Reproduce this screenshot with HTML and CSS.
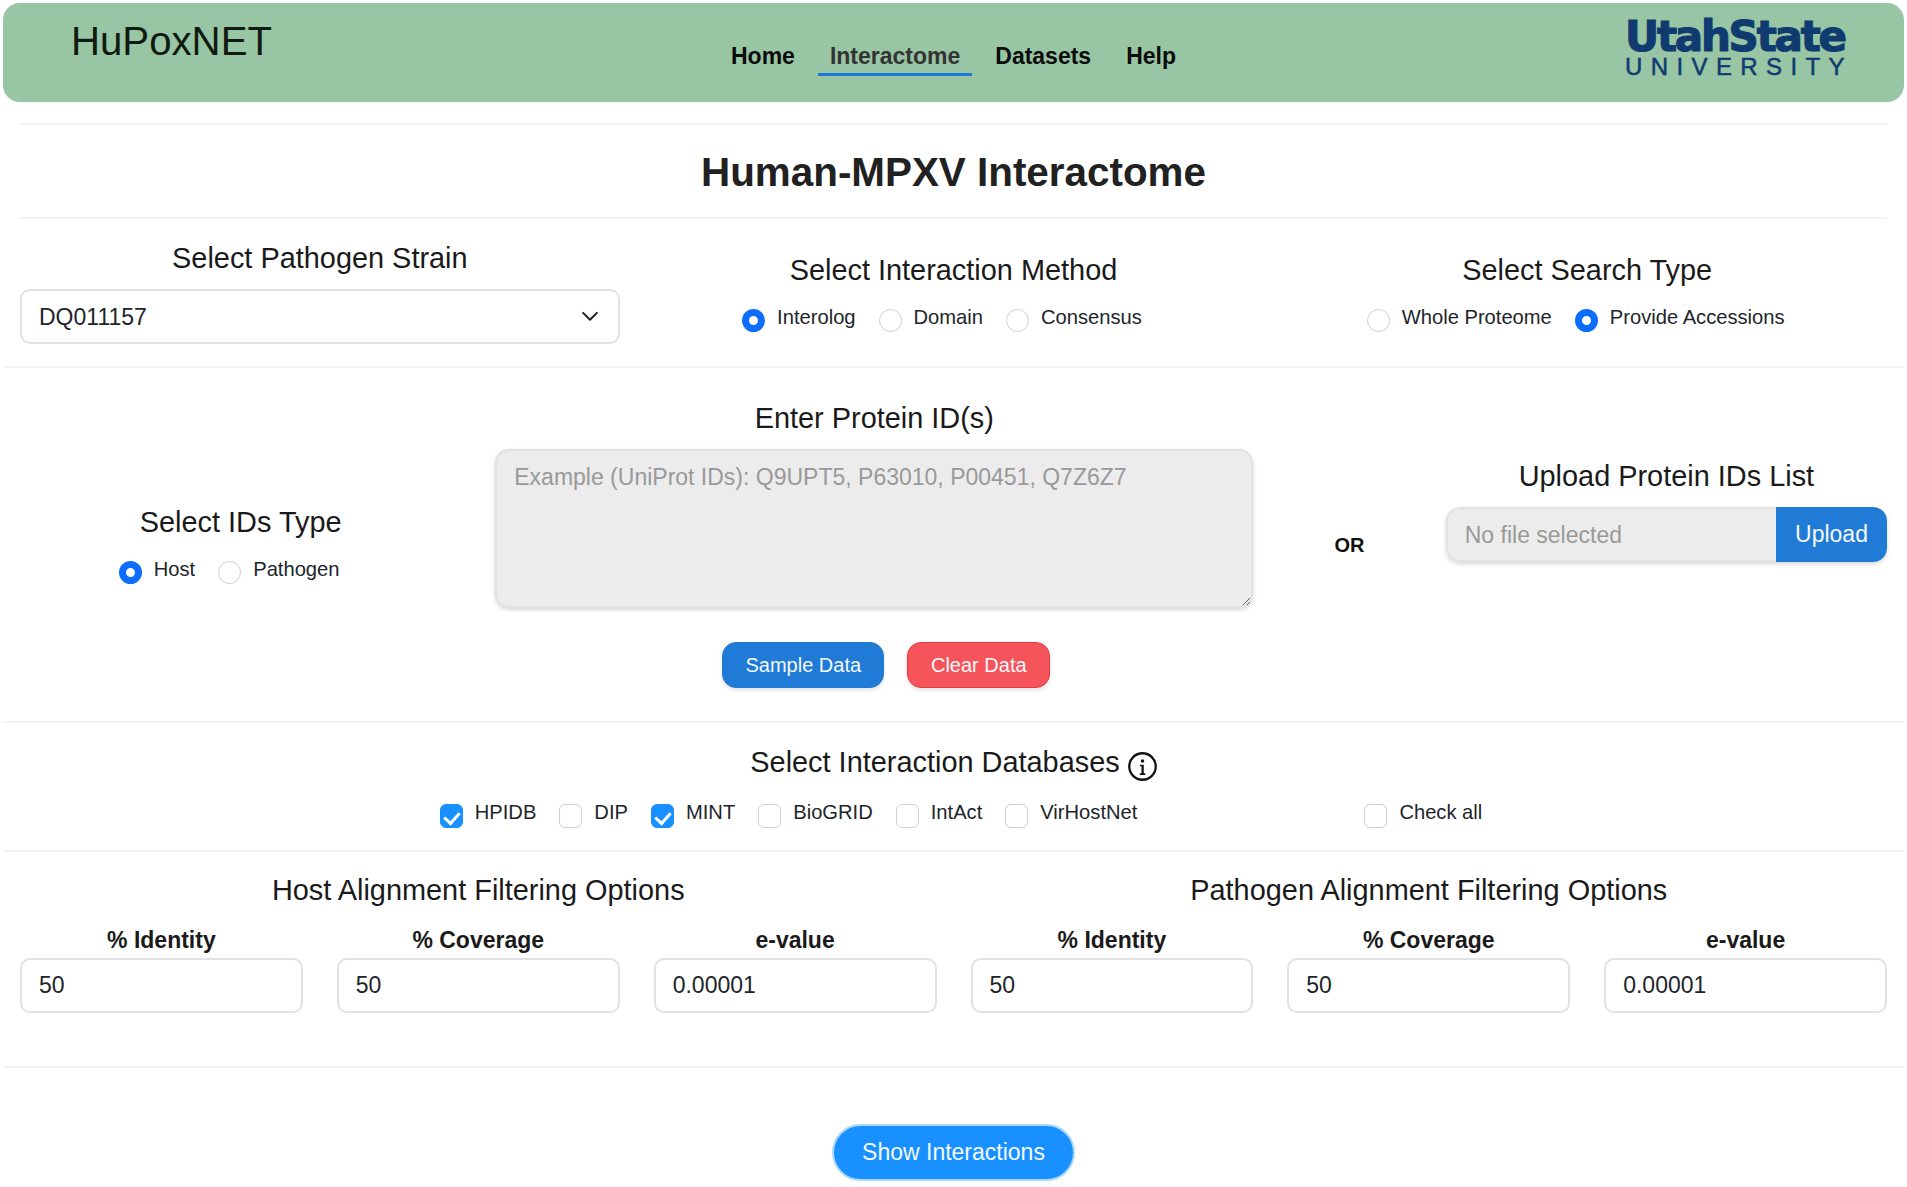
FILE: index.html
```html
<!DOCTYPE html>
<html lang="en">
<head>
<meta charset="utf-8">
<title>HuPoxNET</title>
<link rel="stylesheet" href="styles.css">
</head>
<body>
<header class="site-header">
  <div class="brand">HuPoxNET</div>
  <nav class="nav">
    <a class="nav-link">Home</a>
    <a class="nav-link active">Interactome</a>
    <a class="nav-link">Datasets</a>
    <a class="nav-link">Help</a>
  </nav>
  <div class="logo">
    <div class="logo-top">UtahState</div>
    <div class="logo-bottom">UNIVERSITY</div>
  </div>
</header>

<main>
  <h1 class="page-title">Human-MPXV Interactome</h1>

  <section class="section options">
    <div class="col">
      <h2 class="heading tight">Select Pathogen Strain</h2>
      <div class="select-wrap">
        <select class="field"><option>DQ011157</option></select>
        <svg class="chevron" viewBox="0 0 16 16" width="20" height="20"><path fill="none" stroke="#222" stroke-width="1.6" stroke-linecap="round" stroke-linejoin="round" d="M2.5 5.5 8 11l5.5-5.5"/></svg>
      </div>
    </div>
    <div class="col low">
      <h2 class="heading">Select Interaction Method</h2>
      <div class="choices">
        <label class="choice"><input type="radio" name="method" checked><span>Interolog</span></label>
        <label class="choice"><input type="radio" name="method"><span>Domain</span></label>
        <label class="choice"><input type="radio" name="method"><span>Consensus</span></label>
      </div>
    </div>
    <div class="col low">
      <h2 class="heading">Select Search Type</h2>
      <div class="choices">
        <label class="choice"><input type="radio" name="search"><span>Whole Proteome</span></label>
        <label class="choice"><input type="radio" name="search" checked><span>Provide Accessions</span></label>
      </div>
    </div>
  </section>

  <section class="section ids">
    <div class="ids-type">
      <h2 class="heading">Select IDs Type</h2>
      <div class="choices">
        <label class="choice"><input type="radio" name="idtype" checked><span>Host</span></label>
        <label class="choice"><input type="radio" name="idtype"><span>Pathogen</span></label>
      </div>
    </div>
    <div class="ids-enter">
      <h2 class="heading small-gap">Enter Protein ID(s)</h2>
      <textarea class="ids-text" placeholder="Example (UniProt IDs): Q9UPT5, P63010, P00451, Q7Z6Z7"></textarea>
      <div class="btn-row">
        <button class="btn btn-blue" type="button">Sample Data</button>
        <button class="btn btn-red" type="button">Clear Data</button>
      </div>
    </div>
    <div class="ids-or">OR</div>
    <div class="ids-upload">
      <h2 class="heading small-gap">Upload Protein IDs List</h2>
      <div class="file">
        <div class="file-name">No file selected</div>
        <button class="file-btn" type="button">Upload</button>
      </div>
    </div>
  </section>

  <section class="section dbs">
    <h2 class="heading db-title">Select Interaction Databases
      <svg class="info" viewBox="0 0 28 28" width="29" height="29"><circle cx="14" cy="14" r="12.8" fill="none" stroke="#111" stroke-width="2.2"/><circle cx="14" cy="8.6" r="1.7" fill="#111"/><path fill="#111" d="M11.4 12.2h3.8v8.4h1.5v1.5h-5.3v-1.5h1.6v-6.9h-1.6z"/></svg>
    </h2>
    <div class="choices db-list">
      <label class="choice"><input type="checkbox" checked><span>HPIDB</span></label>
      <label class="choice"><input type="checkbox"><span>DIP</span></label>
      <label class="choice"><input type="checkbox" checked><span>MINT</span></label>
      <label class="choice"><input type="checkbox"><span>BioGRID</span></label>
      <label class="choice"><input type="checkbox"><span>IntAct</span></label>
      <label class="choice"><input type="checkbox"><span>VirHostNet</span></label>
      <label class="choice check-all"><input type="checkbox"><span>Check all</span></label>
    </div>
  </section>

  <section class="section filters">
    <div class="filter-group">
      <h2 class="heading filter-title">Host Alignment Filtering Options</h2>
      <div class="filter-fields">
        <label class="filter"><span class="filter-label">% Identity</span><input class="field" type="text" value="50"></label>
        <label class="filter"><span class="filter-label">% Coverage</span><input class="field" type="text" value="50"></label>
        <label class="filter"><span class="filter-label">e-value</span><input class="field" type="text" value="0.00001"></label>
      </div>
    </div>
    <div class="filter-group">
      <h2 class="heading filter-title">Pathogen Alignment Filtering Options</h2>
      <div class="filter-fields">
        <label class="filter"><span class="filter-label">% Identity</span><input class="field" type="text" value="50"></label>
        <label class="filter"><span class="filter-label">% Coverage</span><input class="field" type="text" value="50"></label>
        <label class="filter"><span class="filter-label">e-value</span><input class="field" type="text" value="0.00001"></label>
      </div>
    </div>
  </section>

  <div class="submit">
    <button class="btn-show" type="button">Show Interactions</button>
  </div>
</main>
</body>
</html>
```
FILE: styles.css
```css
* { box-sizing: border-box; }
html, body { margin: 0; padding: 0; }
body {
  background: #fff;
  color: #212529;
  font-family: "Liberation Sans", Arial, sans-serif;
  overflow: hidden;
  height: 1187px;
}

.site-header {
  display: grid;
  grid-template-columns: 1fr auto 1fr;
  height: 99px;
  margin: 3px 3px 0 3px;
  background: #98c5a3;
  border-radius: 17px;
  box-shadow: 0 1px 2px rgba(0, 0, 0, .06);
}
.brand {
  padding: 16px 0 0 68px;
  font-size: 40.2px;
  line-height: 46px;
  color: #0f1a10;
}
.nav { display: flex; gap: 11px; padding-top: 40px; }
.nav-link {
  height: 33px;
  padding: 0 12px;
  font-size: 23px;
  font-weight: 700;
  line-height: 26px;
  color: #0b0b0b;
  border-bottom: 3px solid transparent;
}
.nav-link.active { color: #333; border-bottom-color: #1f7ad6; }
.logo {
  justify-self: end;
  width: 222px;
  margin-right: 57px;
  padding-top: 14px;
  color: #0f3b70;
}
.logo-top {
  font-family: "DejaVu Sans", sans-serif;
  font-size: 42px;
  font-weight: 700;
  line-height: 39px;
  letter-spacing: -2.2px;
  -webkit-text-stroke: 1.2px #0f3b70;
  white-space: nowrap;
}
.logo-bottom {
  font-size: 24px;
  line-height: 22px;
  letter-spacing: 8.4px;
  -webkit-text-stroke: .5px #0f3b70;
  white-space: nowrap;
}

.page-title {
  height: 96px;
  margin: 21px 20px 0;
  border-top: 2px solid #f3f3f3;
  border-bottom: 2px solid #f3f3f3;
  font-size: 40.4px;
  font-weight: 700;
  line-height: 94px;
  text-align: center;
  color: #212121;
}

.section { margin: 0 3px; border-bottom: 2px solid #f3f3f3; }
.heading {
  margin: 0 0 22px;
  font-size: 28.9px;
  font-weight: 400;
  line-height: 34px;
  text-align: center;
  color: #1a1a1a;
}
.heading.tight { margin-bottom: 14px; }
.heading.small-gap { margin-bottom: 14px; }

.options {
  display: grid;
  grid-template-columns: repeat(3, 1fr);
  height: 149px;
}
.col { padding: 22px 17px 0; }
.col.low { padding-top: 34px; }

.select-wrap { position: relative; }
.chevron { position: absolute; right: 20px; top: 17px; pointer-events: none; }
.field {
  display: block;
  width: 100%;
  height: 55px;
  padding: 0 17px;
  background: #fff;
  border: 2px solid #e0e2e6;
  border-radius: 10px;
  font-family: inherit;
  font-size: 23px;
  color: #212529;
  appearance: none;
  outline: none;
}

.choices { display: flex; justify-content: center; }
.choice {
  display: flex;
  align-items: flex-start;
  gap: 12px;
  margin-right: 23px;
  font-size: 20.16px;
  line-height: 17px;
  color: #212529;
  white-space: nowrap;
}
.choice input {
  position: relative;
  flex: none;
  width: 23px;
  height: 23px;
  margin: 0;
  background: #fff;
  border: 1.5px solid #cfcfcf;
  appearance: none;
}
.choice input[type="radio"] { border-radius: 50%; }
.choice input[type="radio"]:checked {
  background: #fff;
  border: 7px solid #0d6efd;
}
.choice input[type="checkbox"] { height: 24px; border-radius: 6px; }
.choice input[type="checkbox"]:checked { background: #1890ff; border-color: #1890ff; }
.choice input[type="checkbox"]:checked::after {
  content: "";
  position: absolute;
  left: 6.5px;
  top: 3.5px;
  width: 7px;
  height: 12px;
  border: solid #fff;
  border-width: 0 3px 3px 0;
  transform: rotate(42deg);
}

.ids {
  display: grid;
  grid-template-columns: 3fr 5fr 1fr 3fr;
  height: 355px;
}
.ids-type { padding: 137px 17px 0; }
.ids-type .heading { margin-bottom: 22px; }
.ids-enter { padding: 33px 17px 0; }
.ids-text {
  display: block;
  width: 100%;
  height: 159px;
  padding: 12px 17px;
  background: #ececec;
  border: 2px solid #e2e2e2;
  border-radius: 14px;
  box-shadow: 0 2px 4px rgba(0, 0, 0, .16);
  font-family: inherit;
  font-size: 23px;
  line-height: 28px;
  outline: none;
}
.ids-text::placeholder { color: #999; opacity: 1; }
.btn-row { display: flex; justify-content: center; gap: 23px; margin-top: 34px; padding-left: 24px; }
.btn {
  height: 46px;
  border-radius: 14px;
  font-family: inherit;
  font-size: 20px;
  color: #f4f8fd;
  box-shadow: 0 2px 4px rgba(0, 0, 0, .12);
  cursor: pointer;
}
.btn-blue { width: 162px; background: #1f7bd5; border: 1px solid #1f7bd5; }
.btn-red { width: 143px; background: #f4545a; border: 1px solid #e53b40; }
.ids-or {
  padding-top: 166px;
  font-size: 20px;
  font-weight: 700;
  line-height: 23px;
  text-align: center;
  color: #111;
}
.ids-upload { padding: 91px 17px 0; }
.file {
  display: flex;
  height: 55px;
  border-radius: 14px;
  box-shadow: 0 2px 4px rgba(0, 0, 0, .16);
  overflow: hidden;
}
.file-name {
  flex: 1;
  padding-left: 17px;
  background: #ececec;
  border: 2px solid #e2e2e2;
  border-right: 0;
  border-radius: 14px 0 0 14px;
  font-size: 23px;
  line-height: 52px;
  color: #999;
}
.file-btn {
  width: 111px;
  padding: 0 0 0 0;
  background: #1f7bd5;
  border: 0;
  font-family: inherit;
  font-size: 23px;
  color: #f4f8fd;
}

.dbs { height: 129px; padding-top: 22px; }
.db-title { margin-bottom: 23px; }
.info { vertical-align: -9px; }
.db-list { padding-left: 38px; }
.check-all { margin-left: 204px; }

.filters { display: grid; grid-template-columns: 1fr 1fr; height: 216px; }
.filter-group { padding-top: 21px; }
.filter-title { margin-bottom: 20px; }
.filter-fields { display: grid; grid-template-columns: repeat(3, 1fr); }
.filter { display: block; padding: 0 17px; }
.filter-label {
  display: block;
  margin-bottom: 5px;
  font-size: 23px;
  font-weight: 700;
  line-height: 26px;
  text-align: center;
  color: #1a1a1a;
}

.submit { display: flex; justify-content: center; padding-top: 56px; }
.btn-show {
  width: 243px;
  height: 57px;
  background: #1890ff;
  border: 2px solid #a9d9f7;
  border-radius: 29px;
  font-family: inherit;
  font-size: 23px;
  color: #f4f9ff;
  cursor: pointer;
}
```
